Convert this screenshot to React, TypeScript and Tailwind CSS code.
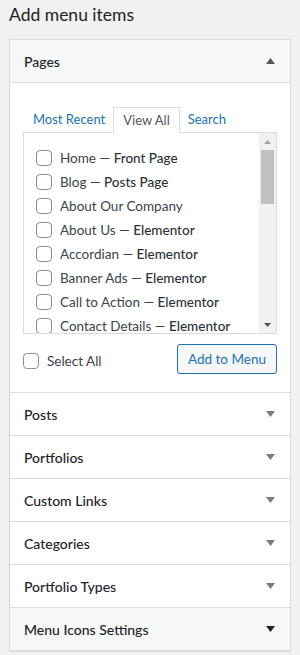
import { useState } from 'react';

const pages: { title: string; state?: string }[] = [
  { title: 'Home', state: 'Front Page' },
  { title: 'Blog', state: 'Posts Page' },
  { title: 'About Our Company' },
  { title: 'About Us', state: 'Elementor' },
  { title: 'Accordian', state: 'Elementor' },
  { title: 'Banner Ads', state: 'Elementor' },
  { title: 'Call to Action', state: 'Elementor' },
  { title: 'Contact Details', state: 'Elementor' },
];

const sections = ['Posts', 'Portfolios', 'Custom Links', 'Categories', 'Portfolio Types'];

function Arrow({ up = false, dark = false }: { up?: boolean; dark?: boolean }) {
  return (
    <svg width="9" height="6" viewBox="0 0 9 6" className={dark ? 'fill-[#1d2327]' : up ? 'fill-[#50575e]' : 'fill-[#787c82]'}>
      {up ? <path d="M0 6 L4.5 0 L9 6 Z" /> : <path d="M0 0 L9 0 L4.5 6 Z" />}
    </svg>
  );
}

function Checkbox() {
  return <span className="w-4 h-4 shrink-0 rounded-[4px] border border-[#8c8f94] bg-white" />;
}

export default function App() {
  const [tab] = useState('View All');

  return (
    <div className="w-[300px] h-[655px] overflow-hidden bg-[#f1f1f1] text-[#1d2327]" style={{ fontFamily: 'Lato, "Noto Sans", sans-serif' }}>
      <h2 className="h-[39px] pl-[9px] pt-[3px] text-[17.5px] leading-[24px]">Add menu items</h2>

      <div className="mx-[9px] border border-[#dcdcde] bg-white shadow-[0_1px_1px_rgba(0,0,0,0.08)]">
        <div className="h-[43px] flex items-center justify-between pl-[14px] pr-[15px] bg-[#f6f7f7] border-b border-[#dcdcde]">
          <span className="text-[14px] font-medium">Pages</span>
          <Arrow up />
        </div>

        <div className="h-[310px] px-[13px] pt-[24px] border-b border-[#dcdcde]">
          <ul className="flex text-[13px] leading-[24px] pl-[10px]">
            {['Most Recent', 'View All', 'Search'].map(t => (
              <li
                key={t}
                className={
                  t === tab
                    ? 'relative z-10 -mb-px h-[26px] px-[9px] border border-b-0 border-[#dcdcde] bg-white text-[#50575e]'
                    : 'mr-[8px] text-[#2271b1] last:ml-[8px] last:mr-0'
                }
              >
                {t}
              </li>
            ))}
          </ul>

          <div className="h-[202px] flex border border-[#dcdcde] bg-white overflow-hidden">
            <ul className="flex-1 pt-[13px] pl-[12px] text-[13.5px]">
              {pages.map(p => (
                <li key={p.title} className="h-[24px] flex items-center gap-[8px] text-[#3c434a] whitespace-nowrap">
                  <Checkbox />
                  <span>
                    {p.title}
                    {p.state && (
                      <>
                        {' — '}
                        <span className="font-medium text-[#2c3338]">{p.state}</span>
                      </>
                    )}
                  </span>
                </li>
              ))}
            </ul>
            <div className="w-[17px] shrink-0 bg-[#f1f1f1] flex flex-col items-center">
              <div className="h-[17px] flex items-center justify-center">
                <svg width="7" height="4" viewBox="0 0 7 4" className="fill-[#a3a3a3]"><path d="M0 4 L3.5 0 L7 4 Z" /></svg>
              </div>
              <div className="w-[13px] h-[54px] bg-[#c1c1c1]" />
              <div className="flex-1" />
              <div className="h-[17px] flex items-center justify-center">
                <svg width="7" height="4" viewBox="0 0 7 4" className="fill-[#505050]"><path d="M0 0 L7 0 L3.5 4 Z" /></svg>
              </div>
            </div>
          </div>

          <div className="mt-[10px] flex items-start justify-between">
            <label className="mt-[7px] flex items-center gap-[8px] text-[13.5px] text-[#3c434a]">
              <Checkbox />
              <span>Select All</span>
            </label>
            <button className="h-[30px] px-[10px] flex items-center rounded-[3px] border border-[#2271b1] bg-[#f6f7f7] text-[13.5px] text-[#2271b1]">
              Add to Menu
            </button>
          </div>
        </div>

        {sections.map(s => (
          <div key={s} className="h-[43px] flex items-center justify-between pl-[14px] pr-[15px] border-b border-[#dcdcde]">
            <span className="text-[14px] font-medium">{s}</span>
            <Arrow />
          </div>
        ))}

        <div className="h-[42px] flex items-center justify-between pl-[14px] pr-[15px] bg-[#f6f7f7]">
          <span className="text-[14px] font-medium">Menu Icons Settings</span>
          <Arrow dark />
        </div>
      </div>
    </div>
  );
}
